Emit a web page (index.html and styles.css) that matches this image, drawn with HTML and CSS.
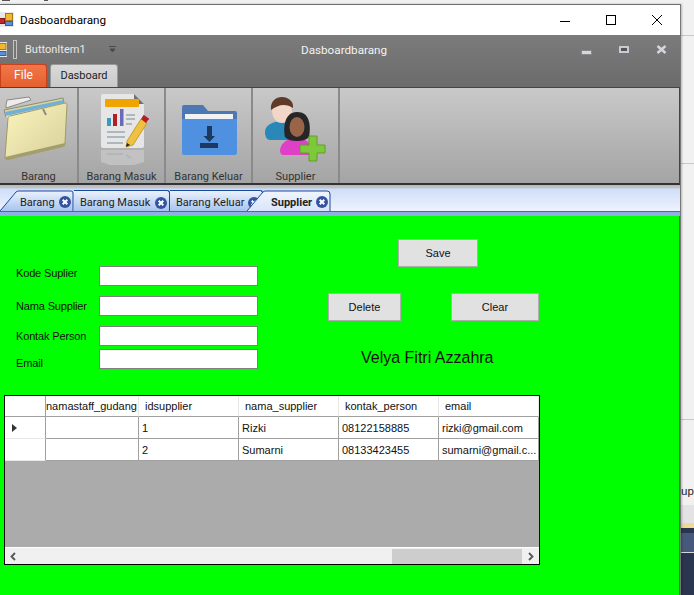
FILE: index.html
```html
<!DOCTYPE html>
<html lang="en">
<head>
  <meta charset="UTF-8" />
  <title>Dasboardbarang</title>
  <link rel="stylesheet" href="styles.css">
</head>
<body>

  <svg class="defs" width="0" height="0">
    <defs>
      <symbol id="tab-close" viewBox="0 0 12 12">
        <circle cx="6" cy="6" r="6" fill="#34549f"/>
        <path d="M3.700 3.700l4.600 4.600M8.300 3.700l-4.600 4.600" stroke="#fff" stroke-width="2" fill="none"/>
      </symbol>
      <linearGradient id="tab-fill" x1="0" y1="0" x2="0" y2="1">
        <stop offset="0" stop-color="#eaf1fd"/>
        <stop offset="1" stop-color="#a8c4ee"/>
      </linearGradient>
      <linearGradient id="tab-active" x1="0" y1="0" x2="0" y2="1">
        <stop offset="0" stop-color="#f0f5fe"/>
        <stop offset="1" stop-color="#d8e5fb"/>
      </linearGradient>
      <linearGradient id="folder-front" x1="0" y1="0" x2="1" y2="1">
        <stop offset="0" stop-color="#fbf5bc"/>
        <stop offset="1" stop-color="#d8cf9c"/>
      </linearGradient>
    </defs>
  </svg>

  <!-- Whatever is behind the window -->
  <div class="backdrop">
    <div class="back-top"></div>
    <div class="back-line l1"></div>
    <div class="back-line l2"></div>
    <div class="back-line l3"></div>
    <span class="back-text">up</span>
    <div class="back-light"></div>
    <div class="back-dark"><div class="back-band"></div></div>
  </div>

  <div class="window">
    <!-- Windows title bar -->
    <div class="titlebar">
      <svg class="app-icon" width="15" height="15" viewBox="0 0 15 15">
        <rect x="0" y="0" width="15" height="15" fill="#e8e8e8"/>
        <rect x="6.500" y="1.500" width="7" height="7" fill="#f2b632" stroke="#a9781c"/>
        <rect x="0.500" y="6.500" width="5" height="5" fill="#c4262e" stroke="#7a1a1a"/>
        <rect x="6.500" y="9.500" width="7" height="4" fill="#5a8fd8" stroke="#3a5f9a"/>
      </svg>
      <span class="title-text">Dasboardbarang</span>
      <div class="win-btns">
        <svg width="12" height="12" viewBox="0 0 12 12"><path d="M1 7.500h10" stroke="#000" fill="none"/></svg>
        <svg width="12" height="12" viewBox="0 0 12 12"><rect x="1.500" y="1.500" width="9" height="9" stroke="#000" fill="none"/></svg>
        <svg width="12" height="12" viewBox="0 0 12 12"><path d="M1 1l10 10M11 1L1 11" stroke="#000" fill="none"/></svg>
      </div>
    </div>

    <!-- Ribbon -->
    <div class="ribbon-head">
      <div class="qat">
        <svg class="qat-icon" width="7" height="15" viewBox="0 0 7 15">
          <rect x="-7" y="0" width="14" height="15" fill="#e8e8e8"/>
          <rect x="-1" y="1.500" width="7" height="6" fill="#f2b632" stroke="#a9781c"/>
          <rect x="-1" y="9.500" width="7" height="4" fill="#5a8fd8" stroke="#3a5f9a"/>
        </svg>
        <span class="qat-sep"></span>
        <span class="qat-item">ButtonItem1</span>
        <svg class="qat-drop" width="7" height="7" viewBox="0 0 7 7"><path d="M0 .500h7M1 3h5L3.500 6z" stroke="#4a4a4a" fill="#4a4a4a" stroke-width="1"/></svg>
        <span class="ribbon-title">Dasboardbarang</span>
        <div class="mdi-btns">
          <span class="mdi-min"></span>
          <span class="mdi-max"></span>
          <svg width="11" height="9" viewBox="0 0 11 9"><path d="M1.500 1l8 7M9.500 1l-8 7" stroke="#d4d6e0" stroke-width="2.500" fill="none"/></svg>
        </div>
      </div>
      <div class="ribbon-tabs">
        <span class="file-tab">File</span>
        <span class="home-tab">Dasboard</span>
      </div>
    </div>

    <div class="ribbon-body">
      <div class="rb-item w-barang">
        <svg width="77" height="72" viewBox="0 88 77 72">
          <path d="M6 105l1-5 22-3 2 3-25 8z" fill="#ececec" stroke="#8a8a80"/>
          <path d="M4 110l59-12 1 5-58 14z" fill="#d9d4a8" stroke="#8f8c6c"/>
          <path d="M5 112L63 100l1 3L7 117z" fill="#6fb2d8"/>
          <path d="M6 116l58-13 3 1-2 4-56 13z" fill="#ece8cc"/>
          <path d="M8 118c0-1 1-2 2-2l55-13c2 0 2 1 2 2l-2 38c0 2-1 2-2 3L8 159c-2 1-3 0-3-2z" fill="url(#folder-front)" stroke="#a09a68"/>
          <path d="M5 157l60-14v2c0 1-1 2-2 2L8 160c-2 0-3-1-3-3z" fill="#a49e6c"/>
          <path d="M43 109l3 6" stroke="#8c8c84" stroke-width="2" fill="none"/>
        </svg>
        <span class="rb-label">Barang</span>
      </div>
      <div class="rb-item w-masuk">
        <svg width="85" height="78" viewBox="79 88 85 78">
          <path d="M101 96a2 2 0 012-2h31l10 10v42a2 2 0 01-2 2h-39a2 2 0 01-2-2z" fill="#e6e6e6"/>
          <path d="M134 94l10 10h-10z" fill="#707070"/>
          <rect x="105" y="99" width="34" height="8" rx="1" fill="#f0a400"/>
          <rect x="107" y="118" width="4" height="8" fill="#3a9ac0"/>
          <rect x="113" y="114" width="4" height="12" fill="#b02024"/>
          <rect x="120" y="109" width="3.500" height="17" fill="#6a6ab8"/>
          <path d="M126 115h9M126 119h9M126 124h6M107 132h18M107 137h18M107 143h16" stroke="#9aa8b0" stroke-width="1.500" fill="none"/>
          <path d="M127 141l14-22 6 4-14 22-7 2z" fill="#f0c040" stroke="#b89020" stroke-width=".8"/>
          <path d="M141 119l2-3a1 1 0 011-1l4 3a1 1 0 010 2l-2 3z" fill="#b81c24"/>
          <path d="M126 147l1-4 3 2z" fill="#222"/>
          <path d="M101 150h43v12l-10 3h-24l-9-3z" fill="#cfcfcf" opacity=".6"/>
          <path d="M107 154h16M126 155l5 3" stroke="#aeb4b8" stroke-width="1.500" fill="none"/>
        </svg>
        <span class="rb-label">Barang Masuk</span>
      </div>
      <div class="rb-item w-keluar">
        <svg width="85" height="78" viewBox="166 88 85 78">
          <path d="M182 107a2 2 0 012-2h19l5 6h27a2 2 0 012 2v10h-55z" fill="#4c78b4"/>
          <rect x="185" y="114" width="48" height="8" fill="#f2f2f2"/>
          <path d="M182 119h55v34a2 2 0 01-2 2h-51a2 2 0 01-2-2z" fill="#4f90e0"/>
          <path d="M207 126h5v10h3l-5.500 6-6-6h3.500zM200 143h18v5h-18z" fill="#1c3a60"/>
        </svg>
        <span class="rb-label">Barang Keluar</span>
      </div>
      <div class="rb-item w-supplier">
        <svg width="85" height="78" viewBox="253 88 85 78">
          <path d="M265 132c0-6 6-9 10-10l14-1 2 19h-21c-3 0-5-3-5-8z" fill="#2a88b8"/>
          <ellipse cx="282" cy="111" rx="10" ry="12" fill="#f2d6c8"/>
          <path d="M271 110c-1-9 5-13 11-13s12 4 11 11c-3-2-6-3-9-3-5 0-9 2-13 5z" fill="#5e3a28"/>
          <path d="M280 150c1-8 9-12 16-12s14 3 14 9v8h-26c-3 0-4-2-4-5z" fill="#e040c8"/>
          <path d="M285 137c-2-8-1-25 12-25s14 14 12 25c-3 3-7 4-12 4s-9-1-12-4z" fill="#262626"/>
          <ellipse cx="297" cy="127" rx="7.500" ry="10" fill="#9a6448"/>
          <path d="M309 136h8v9h8v8h-8v8h-8v-8h-9v-8h9z" fill="#7ec83c" stroke="#5f9e2a"/>
        </svg>
        <span class="rb-label">Supplier</span>
      </div>
    </div>

    <!-- MDI tabs -->
    <div class="mdi-strip">
      <div class="doc-tab t1">
        <svg class="tab-shape" width="74" height="21" viewBox="0 0 74 21"><path d="M0 21L16 2q1-1 3-1h52q2 0 2 2v18" fill="url(#tab-fill)" stroke="#1a4aa0"/></svg>
        <span class="tab-text">Barang</span>
        <svg class="x" width="12" height="12"><use href="#tab-close"/></svg>
      </div>
      <div class="doc-tab t2">
        <span class="tab-text">Barang Masuk</span>
        <svg class="x" width="12" height="12"><use href="#tab-close"/></svg>
      </div>
      <div class="doc-tab t3">
        <span class="tab-text">Barang Keluar</span>
        <svg class="x" width="12" height="12"><use href="#tab-close"/></svg>
      </div>
      <div class="doc-tab t4">
        <svg class="tab-shape" width="84" height="21" viewBox="0 0 84 21"><path d="M0 21L16 2q1-1 3-1h61q3 0 3 3v17" fill="url(#tab-active)" stroke="#1a4aa0"/></svg>
        <span class="tab-text">Supplier</span>
        <svg class="x" width="12" height="12"><use href="#tab-close"/></svg>
      </div>
    </div>
    <div class="mdi-rule"></div>

    <!-- Supplier form -->
    <div class="content">
      <div class="top-area">
        <div class="fields">
          <label class="field f1"><span>Kode Suplier</span><input type="text"></label>
          <label class="field f2"><span>Nama Supplier</span><input type="text"></label>
          <label class="field f3"><span>Kontak Person</span><input type="text"></label>
          <label class="field f4"><span>Email</span><input type="text"></label>
        </div>
        <div class="actions">
          <button class="btn save">Save</button>
          <div class="btn-row">
            <button class="btn">Delete</button>
            <button class="btn">Clear</button>
          </div>
          <div class="name">Velya Fitri Azzahra</div>
        </div>
      </div>

      <div class="grid">
        <table>
          <tr>
            <th class="c0"></th><th class="c1 tight">namastaff_gudang</th><th class="c2">idsupplier</th><th class="c3">nama_supplier</th><th class="c4">kontak_person</th><th class="c5">email</th>
          </tr>
          <tr>
            <td class="c0"><span class="arrow"></span></td><td class="c1"></td><td class="c2">1</td><td class="c3">Rizki</td><td class="c4">08122158885</td><td class="c5">rizki@gmail.com</td>
          </tr>
          <tr>
            <td class="c0"></td><td class="c1"></td><td class="c2">2</td><td class="c3">Sumarni</td><td class="c4">08133423455</td><td class="c5">sumarni@gmail.c...</td>
          </tr>
        </table>
        <div class="grid-empty"></div>
        <div class="hscroll">
          <svg width="9" height="9" viewBox="0 0 9 9"><path d="M6 1L2.500 4.500 6 8" stroke="#555" stroke-width="1.800" fill="none"/></svg>
          <div class="track"><div class="thumb"></div></div>
          <svg width="9" height="9" viewBox="0 0 9 9"><path d="M3 1l3.500 3.500L3 8" stroke="#555" stroke-width="1.800" fill="none"/></svg>
        </div>
      </div>
    </div>
  </div>

</body>
</html>
```

FILE: styles.css
```css
html, body { margin:0; padding:0; }
body { width:694px; height:595px; overflow:hidden; position:relative; background:#f1f1f1; font-family:Roboto, "Liberation Sans", sans-serif; font-size:11px; color:#1a1a1a; }
.defs { position:absolute; }

/* behind the window */
.backdrop { position:absolute; inset:0; }
.back-top { position:absolute; left:2px; top:0; width:46px; height:1px; background:linear-gradient(to right, #555 0, #555 8px, transparent 8px, transparent 42px, #555 42px); }
.back-line { position:absolute; left:681px; right:0; height:1px; background:#c8c8c8; }
.l1 { top:35px; }
.l2 { top:163px; }
.l3 { top:419px; }
.back-text { position:absolute; left:681px; top:485px; font-family:"Liberation Sans", sans-serif; font-size:11.500px; color:#222; }
.back-light { position:absolute; left:681px; right:0; top:505px; height:18px; background:#e3e3e3; }
.back-dark { position:absolute; left:681px; right:0; top:523px; bottom:0; background:#2a3550; border-top:5px solid #f0d898; }
.back-band { height:19px; margin-top:5px; background:#46597c; border-bottom:1px solid #d8d8d8; }

.window { position:absolute; left:0; top:4px; width:680px; height:591px; background:#0f0; border-top:1px solid #6e6e6e; border-right:1px solid #777; box-shadow:1px 0 2px rgba(0,0,0,.25); display:flex; flex-direction:column; }

.titlebar { height:30px; flex:none; background:#fff; display:flex; align-items:center; color:#000; }
.app-icon { margin-left:-1px; margin-bottom:1px; }
.title-text { margin-left:6px; font-size:11.700px; }
.win-btns { margin-left:auto; margin-right:17px; display:flex; gap:34px; margin-bottom:1px; }

.ribbon-head { height:52px; flex:none; background:linear-gradient(#7b7b7b, #6b6b6b); }
.qat { height:29px; display:flex; align-items:center; color:#eee; }
.qat-sep { width:2px; height:17px; border:1px solid #c4c4c4; margin-left:6px; }
.qat-item { margin-left:8px; color:#e8e8e8; }
.qat-drop { margin-left:23px; }
.ribbon-title { position:absolute; left:301px; font-size:11.700px; color:#f2f2f2; }
.mdi-btns { margin-left:auto; margin-right:13px; display:flex; align-items:center; gap:27px; }
.mdi-min { width:9px; height:3px; background:#d4d6e0; margin-top:5px; border:1px solid #888; border-radius:1px; }
.mdi-max { width:6px; height:3px; border:2px solid #c8cad6; background:#555; outline:1px solid #777; }

.ribbon-tabs { height:23px; display:flex; align-items:flex-end; }
.file-tab { width:47px; height:23px; box-sizing:border-box; background:linear-gradient(#f2764a, #e4602e); border:1px solid #c8401c; border-bottom:none; border-radius:0 3px 0 0; color:#fff; text-align:center; line-height:21px; font-size:12px; }
.home-tab { width:68px; height:23px; margin-left:3px; box-sizing:border-box; background:linear-gradient(#dadada, #c9c9c9); border:1px solid #999; border-bottom:none; border-radius:3px 3px 0 0; color:#222; text-align:center; line-height:21px; }

.ribbon-body { height:98px; flex:none; box-sizing:border-box; background:linear-gradient(#c9c9c9, #a4a4a4); border-top:1px solid #444; border-right:1px solid #444; border-bottom:2px solid #333; display:flex; }
.rb-item { box-sizing:border-box; border-right:2px solid #8a8a8a; display:flex; flex-direction:column; align-items:center; }
.rb-item svg { flex:none; }
.rb-label { margin-top:auto; height:12px; line-height:12px; color:#333; white-space:nowrap; }
.w-barang { width:79px; }
.w-masuk { width:87px; }
.w-keluar { width:87px; }
.w-supplier { width:87px; }

.mdi-strip { height:26px; flex:none; background:linear-gradient(#b8b8b8 0, #c0c4cc 3px, #cfdef8 4px, #eef3fe); display:flex; align-items:flex-end; position:relative; }
.doc-tab { height:21px; box-sizing:border-box; position:relative; display:flex; align-items:center; justify-content:space-between; padding-top:3px; color:#222; white-space:nowrap; border:1px solid #1a4aa0; border-bottom:none; border-left:none; border-radius:0 3px 0 0; background:linear-gradient(#eaf1fd, #a8c4ee); }
.tab-shape { position:absolute; left:0; top:0; }
.tab-text, .x { position:relative; }
.x { flex:none; margin-right:2px; }
.t1 { width:74px; padding-left:20px; border:none; background:none; }
.t1 .x { margin-right:3px; }
.t2 { width:96px; padding-left:6px; }
.t3 { width:93px; padding-left:6px; }
.t4 { width:84px; margin-left:-16px; padding-left:24px; border:none; background:none; font-weight:bold; }
.t4 .x { margin-right:3px; }
.mdi-rule { height:5px; flex:none; background:#8fb0e4; border-top:1px solid #4a6aa8; box-sizing:border-box; }

.content { flex:1; background:#0f0; padding:0 0 0 4px; font-family:"Liberation Sans", sans-serif; font-size:11px; border-right:1px solid #666; }
.top-area { height:179px; display:flex; }
.fields { width:254px; padding-top:50px; box-sizing:border-box; }
.field { display:flex; color:#111; }
.field span { width:83px; padding-left:12px; letter-spacing:-.15px; }
.field input { width:159px; height:20px; box-sizing:border-box; border:1px solid #808080; background:#fff; padding:0; margin:0; }
.f1, .f2 { height:30px; }
.f3 { height:23px; }
.f1 span { margin-top:1px; }
.f2 span { margin-top:4px; }
.f3 span { margin-top:4px; }
.f4 span { margin-top:8px; }

.actions { flex:1; padding-left:70px; padding-top:23px; }
.btn { width:73px; height:28px; box-sizing:border-box; border:1px solid #adadad; background:#e1e1e1; font-family:"Liberation Sans", sans-serif; font-size:11px; color:#111; padding:0; display:block; }
.save { width:80px; margin-left:70px; }
.btn-row { display:flex; margin-top:26px; gap:50px; }
.btn-row .btn:last-child { width:88px; }
.name { margin-top:28px; margin-left:33px; font-size:16px; color:#111; }

.grid { width:536px; height:170px; box-sizing:border-box; border:1px solid #000; background:#ababab; display:flex; flex-direction:column; }
.grid table { border-collapse:separate; border-spacing:0; table-layout:fixed; width:534px; flex:none; background:#fff; }
.grid th, .grid td { box-sizing:border-box; padding:0 0 0 3px; font-weight:normal; text-align:left; border-right:1px solid #a0a0a0; border-bottom:1px solid #a0a0a0; white-space:nowrap; overflow:hidden; color:#111; }
.grid td { height:22px; }
.grid th { height:21px; padding-left:6px; border-right-color:#e8e8e8; }
.grid th.tight { padding-left:0; }
.c0 { width:41px; }
.c1 { width:93px; }
.c2, .c3, .c4 { width:100px; }
.c5 { width:100px; }
.grid .c0 { padding-left:0; border-right-color:#a0a0a0; }
.grid td.c0 { border-bottom-color:#e8e8e8; }
.arrow { display:block; width:0; height:0; border-left:5px solid #333; border-top:4.500px solid transparent; border-bottom:4.500px solid transparent; margin-left:7px; }
.grid-empty { flex:1; }
.hscroll { height:17px; flex:none; background:#f0f0f0; display:flex; align-items:center; justify-content:space-between; padding:0 4px; border-top:1px solid #fff; box-sizing:border-box; }
.track { flex:1; height:15px; margin:0 4px; position:relative; }
.thumb { position:absolute; right:0; width:130px; height:15px; background:#cdcdcd; }
```
